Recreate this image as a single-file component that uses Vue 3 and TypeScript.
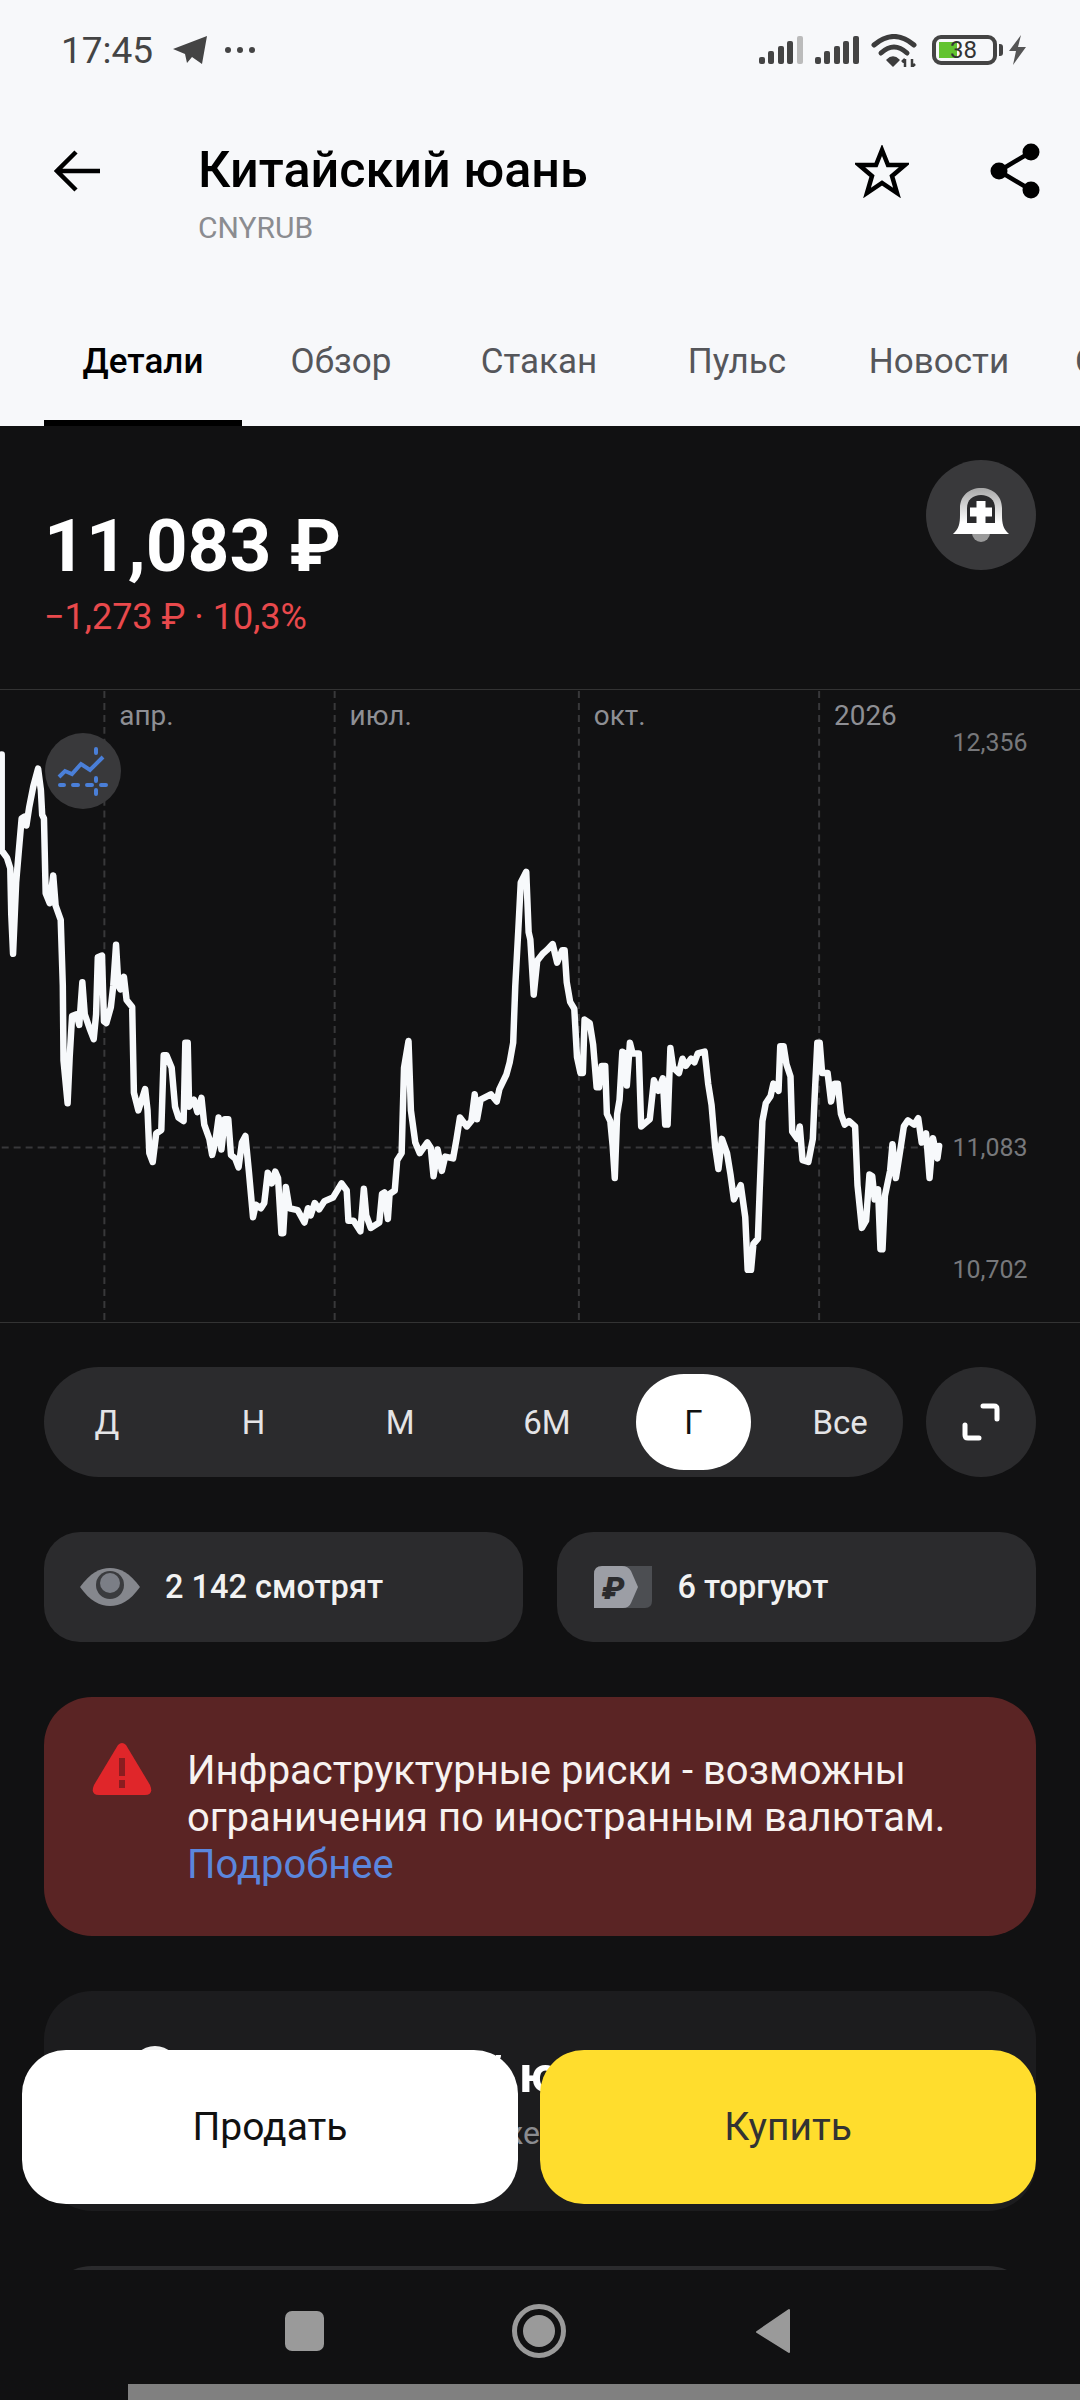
<script setup lang="ts">
import { computed } from 'vue'

const tabs = ['Детали', 'Обзор', 'Стакан', 'Пульс', 'Новости', 'Сделки']
const periods = ['Д', 'Н', 'М', '6М', 'Г', 'Все']
const months = [
  { x: 103, label: 'апр.' },
  { x: 334, label: 'июл.' },
  { x: 579, label: 'окт.' },
  { x: 820, label: '2026' },
]
const prices = [
  { y: 750, label: '12,356' },
  { y: 1156, label: '11,083' },
  { y: 1279, label: '10,702' },
]

// traced from the zoomed chart, x/2.904 and y/2.8 from the top of the crop
const partA = [0,150,0,420,15,440,25,470,28,600,33,710,38,600,42,510,50,420,58,330,66,325,72,350,80,300,92,240,106,190,114,250,118,320,123,330,128,540,140,568,150,490,157,575,172,615,178,800,180,1010,192,1130,198,1000,205,885,218,880,226,910,235,790,242,880,256,920,268,950,275,880,280,720,292,715,298,900,305,905,318,860,325,800,333,685,340,800,346,810,356,775,364,840,380,860,385,1100,398,1150,408,1120,418,1090,425,1150,430,1270,440,1295,450,1215,465,1205,472,995,480,995,495,1030,505,1140,515,1170,530,1180,535,960,542,960,546,1140,560,1120,570,1155,582,1115,590,1190,605,1230,613,1275,622,1240,632,1170,640,1260,650,1175,660,1175,668,1275,680,1285,690,1310,700,1240,710,1222,720,1320,732,1450,740,1415,755,1425,765,1410,775,1325,787,1355,797,1322,805,1340,815,1495,820,1495,828,1365,838,1425,862,1430,882,1465,892,1425,900,1445,912,1410,925,1428,940,1405,965,1395,990,1355,1005,1375,1010,1460,1025,1460,1045,1490,1055,1370,1062,1445,1075,1480,1100,1465,1108,1385,1115,1380,1125,1455,1130,1385,1145,1375,1152,1290,1165,1270,1172,1030,1185,955,1192,1150,1205,1240,1218,1270,1240,1240,1250,1255,1258,1335,1270,1260,1282,1320,1292,1280,1315,1285,1325,1230,1335,1170,1355,1195,1368,1180,1378,1105,1385,1175,1395,1120,1425,1105,1442,1125,1450,1090,1470,1050,1480,1015,1490,960,1496,800,1505,640,1512,510,1528,480,1535,650,1540,670,1550,825,1560,730]
const partB = [8,710,20,700,37,683,50,735,65,700,72,700,78,790,88,845,100,865,108,1000,118,1045,125,1045,130,895,145,905,155,965,165,1085,172,1085,180,1025,190,1025,195,1160,205,1180,212,1250,218,1340,225,1160,232,1120,240,985,248,990,253,1080,262,960,270,990,288,990,295,1195,320,1175,332,1065,345,1095,358,1060,365,1190,372,1190,380,975,388,1030,405,1045,415,1005,425,1025,440,1005,450,1015,460,990,480,985,490,1075,500,1135,510,1250,520,1315,530,1230,545,1270,555,1330,565,1400,585,1360,598,1450,605,1598,615,1598,622,1525,635,1510,640,1380,648,1180,658,1130,672,1110,680,1075,695,1095,700,970,710,970,718,1020,730,1055,735,1210,750,1230,757,1195,765,1290,782,1295,795,1230,800,1120,808,960,815,960,822,1045,838,1045,848,1125,858,1075,868,1075,877,1160,888,1190,900,1180,918,1195,925,1360,938,1480,950,1460,960,1330,968,1335,975,1400,985,1372,992,1540,998,1540,1005,1390,1020,1320,1027,1245,1037,1340,1050,1260,1060,1195,1072,1178,1090,1190,1102,1172,1112,1240,1125,1215,1135,1340,1145,1228,1158,1285,1163,1250]

function toPoints(raw: number[], dx: number) {
  const out: string[] = []
  for (let i = 0; i < raw.length; i += 2) {
    out.push(`${((raw[i] + dx) / 2.904).toFixed(1)},${(700 + raw[i + 1] / 2.8).toFixed(1)}`)
  }
  return out
}

const linePoints = computed(() => [...toPoints(partA, 0), ...toPoints(partB, 1568)].join(' '))
</script>

<template>
  <div class="screen">
    <header class="top">
      <div class="status">
        <span class="time">17:45</span>
        <svg class="plane" width="34" height="30" viewBox="0 0 34 30">
          <path d="M34 1 L29 29 L19 22 L14 28 L12 19 L0 14 Z" fill="#444" />
        </svg>
        <span class="dots"><i></i><i></i><i></i></span>
        <span class="status-gap"></span>
        <svg width="44" height="28" viewBox="0 0 44 28">
          <rect x="0" y="21" width="6" height="7" rx="2" fill="#444" />
          <rect x="9" y="15" width="6" height="13" rx="2" fill="#444" />
          <rect x="19" y="10" width="6" height="18" rx="2" fill="#444" />
          <rect x="28" y="5" width="6" height="23" rx="2" fill="#444" />
          <rect x="38" y="0" width="6" height="28" rx="2" fill="#bbb" />
        </svg>
        <svg width="44" height="28" viewBox="0 0 44 28">
          <rect x="0" y="21" width="6" height="7" rx="2" fill="#444" />
          <rect x="9" y="15" width="6" height="13" rx="2" fill="#444" />
          <rect x="19" y="10" width="6" height="18" rx="2" fill="#444" />
          <rect x="28" y="5" width="6" height="23" rx="2" fill="#444" />
          <rect x="38" y="0" width="6" height="28" rx="2" fill="#444" />
        </svg>
        <svg class="wifi" width="46" height="33" viewBox="0 0 46 33">
          <g fill="none" stroke="#3c3c3c" stroke-width="5" stroke-linecap="round">
            <path d="M3 11 Q23 -6 43 11" />
            <path d="M10 19 Q23 7 36 19" />
          </g>
          <path d="M16 26 Q22 20 28 26 L22 32 Z" fill="#3c3c3c" stroke="#3c3c3c" stroke-width="1.5" stroke-linejoin="round" />
          <path d="M34 33 V25 M31 28 L34 25 M41 25 V33 M41 33 L44 30" fill="none" stroke="#3c3c3c" stroke-width="2.5" />
        </svg>
        <div class="battery">
          <span class="battery-fill"></span>
          <span class="battery-num">38</span>
        </div>
        <span class="battery-nub"></span>
        <svg class="bolt" width="19" height="30" viewBox="0 0 19 30">
          <path d="M13 0 L1 16 H8 L5 30 L18 12 H10 Z" fill="#555" />
        </svg>
      </div>

      <div class="toolbar">
        <svg class="back" width="46" height="42" viewBox="0 0 46 42">
          <path d="M46 21 H4 M22 2 L3 21 L22 40" fill="none" stroke="#000" stroke-width="4.5" />
        </svg>
        <div class="titles">
          <div class="title">Китайский юань</div>
          <div class="ticker">CNYRUB</div>
        </div>
        <svg class="star" width="54" height="53" viewBox="0 0 54 53">
          <path d="M27 5 L33 20 L50 20 L37 31 L42 48 L27 38 L12 48 L17 31 L4 20 L21 20 Z" fill="none" stroke="#000" stroke-width="4.5" stroke-linejoin="miter" />
        </svg>
        <svg class="share" width="50" height="56" viewBox="0 0 50 56">
          <path d="M41 9 L9 28 L41 47" fill="none" stroke="#000" stroke-width="4.5" />
          <circle cx="41" cy="9" r="8.5" />
          <circle cx="9" cy="28" r="8.5" />
          <circle cx="41" cy="47" r="8.5" />
        </svg>
      </div>

      <nav class="tabs">
        <div v-for="(t, i) in tabs" :key="t" class="tab" :class="{ active: i === 0, wide: i === 4, last: i === 5 }">
          {{ t }}
        </div>
      </nav>
    </header>

    <main class="dark">
      <section class="quote">
        <div>
          <div class="price">11,083 ₽</div>
          <div class="change">−1,273 ₽ · 10,3%</div>
        </div>
        <button class="round">
          <svg width="60" height="60" viewBox="0 0 60 60">
            <defs>
              <linearGradient id="bellShade" x1="0" y1="0" x2="0" y2="1">
                <stop offset="0" stop-color="#a8a8a8" />
                <stop offset="0.75" stop-color="#fff" />
              </linearGradient>
            </defs>
            <circle cx="30" cy="48" r="9" fill="#9a9a9a" />
            <path d="M2 49 C8 44 9 38 9 30 V23 C9 11 18 3 30 3 C42 3 51 11 51 23 V30 C51 38 52 44 58 49 Z" fill="url(#bellShade)" />
            <path d="M16 38 V23 C16 15 22 10 30 10 C38 10 44 15 44 23 V38 Z" fill="#2a2a2c" />
            <path d="M30 16 V38 M19 27 H41" stroke="#fff" stroke-width="9" />
          </svg>
        </button>
      </section>

      <section class="chart">
        <svg width="1080" height="634" viewBox="0 689 1080 634">
          <g stroke="#38383a" stroke-width="2" stroke-dasharray="7 5">
            <line v-for="m in months" :key="m.x" :x1="m.x" :x2="m.x" y1="690" y2="1322" />
            <line x1="0" x2="940" y1="1148" y2="1148" />
          </g>
          <text v-for="m in months" :key="m.label" class="month" :x="m.x + 15" y="724">{{ m.label }}</text>
          <text v-for="p in prices" :key="p.label" class="axis" x="1029" :y="p.y" text-anchor="end">{{ p.label }}</text>
          <polyline :points="linePoints" fill="none" stroke="#f7f9fb" stroke-width="6.5" stroke-linejoin="round" stroke-linecap="round" />
        </svg>
        <div class="indicator">
          <svg width="76" height="76" viewBox="0 0 76 76">
            <polyline points="14,44 20,38 27,41 36,31 45,37 58,24" fill="none" stroke="#4a7fd8" stroke-width="4" />
            <g stroke="#4a7fd8" stroke-width="4" stroke-linecap="round">
              <path d="M15 52 H19 M28 52 H33 M42 52 H47 M56 52 H61 M51 16 V20 M51 45 V48 M51 57 V61" />
            </g>
          </svg>
        </div>
      </section>

      <section class="ranges">
        <div class="pill">
          <span v-for="p in periods" :key="p" class="period" :class="{ on: p === 'Г' }">{{ p }}</span>
        </div>
        <button class="round">
          <svg width="38" height="38" viewBox="0 0 38 38">
            <path d="M21 3 H32 Q35 3 35 6 V16 M3 22 V32 Q3 35 6 35 H17" fill="none" stroke="#fff" stroke-width="5" stroke-linecap="round" />
          </svg>
        </button>
      </section>

      <section class="stats">
        <div class="stat">
          <svg width="60" height="38" viewBox="0 0 60 38">
            <path d="M0 19 C10 5 20 0 30 0 C40 0 50 5 60 19 C50 33 40 38 30 38 C20 38 10 33 0 19 Z" fill="#85878d" />
            <circle cx="30" cy="17" r="14" fill="#3a3b3e" />
            <circle cx="30" cy="15" r="10" fill="#7b7e86" />
          </svg>
          <span class="stat-text">2 142 смотрят</span>
        </div>
        <div class="stat ruble">
          <svg width="58" height="42" viewBox="0 0 58 42">
            <path d="M22 0 H58 V35 Q58 42 51 42 H22 Z" fill="#4c4e52" />
            <path d="M8 0 H28 Q34 0 37 5 L44 21 L37 37 Q35 42 29 42 H0 V8 Q0 0 8 0 Z" fill="#9c9ea5" />
            <text x="8" y="33" class="tile-sign">₽</text>
          </svg>
          <span class="stat-text">6 торгуют</span>
        </div>
      </section>

      <section class="warning">
        <svg class="warn-icon" width="60" height="54" viewBox="0 0 60 54">
          <path d="M26 3 Q30 -1 34 3 L58 43 Q62 53 53 53 H7 Q-2 53 2 43 Z" fill="#e0262a" />
          <rect x="27" y="16" width="6" height="18" fill="#8a1d20" />
          <rect x="27" y="38" width="6" height="8" fill="#8a1d20" />
        </svg>
        <p class="warn-text">
          Инфраструктурные риски - возможны<br />
          ограничения по иностранным валютам.<br />
          <a class="more">Подробнее</a>
        </p>
      </section>

      <section class="promo">
        <span class="promo-dot"></span>
        <div>
          <div class="promo-title">Китайский юань</div>
          <div class="promo-sub">Торгуется на бирже</div>
        </div>
      </section>

      <section class="next-card"></section>
    </main>

    <div class="actions">
      <button class="action sell">Продать</button>
      <button class="action buy">Купить</button>
    </div>

    <footer class="navbar">
      <span class="nav-square"></span>
      <span class="nav-circle"></span>
      <svg width="36" height="46" viewBox="0 0 36 46">
        <path d="M34 2 V44 L2 24 Z" fill="#9a9a9a" stroke="#9a9a9a" stroke-width="2" stroke-linejoin="round" />
      </svg>
      <span class="gesture"></span>
    </footer>
  </div>
</template>

<style>
body {
  background: #111112;
}
</style>

<style scoped>
.screen {
  position: relative;
  width: 1080px;
  height: 2400px;
  overflow: hidden;
  background: #111112;
  font-family: Roboto, 'Noto Sans', sans-serif;
}

.top {
  height: 426px;
  background: #f7f8fa;
  display: flex;
  flex-direction: column;
}

.status {
  height: 100px;
  display: flex;
  align-items: center;
  padding: 0 53px 0 61px;
  color: #444;
}

.time {
  font-size: 37px;
  width: 112px;
}

.dots {
  display: flex;
  gap: 6px;
  margin-left: 18px;
}

.dots i {
  width: 6px;
  height: 6px;
  border-radius: 50%;
  background: #444;
}

.status-gap {
  flex: 1;
}

.status svg + svg {
  margin-left: 12px;
}

.battery {
  position: relative;
  width: 65px;
  height: 30px;
  margin-left: 15px;
  border: 4px solid #444;
  border-radius: 9px;
  box-sizing: border-box;
  overflow: hidden;
}

.battery-fill {
  position: absolute;
  left: 3px;
  top: 3px;
  bottom: 3px;
  width: 18px;
  background: #62c32f;
}

.battery-num {
  position: absolute;
  left: 14px;
  top: -3px;
  font-size: 24px;
  line-height: 28px;
  color: #333;
}

.battery-nub {
  width: 4px;
  height: 12px;
  margin-left: 2px;
  border-radius: 0 3px 3px 0;
  background: #444;
}

.status .bolt {
  margin-left: 5px;
}

.toolbar {
  height: 146px;
  display: flex;
  align-items: flex-start;
  padding-left: 54px;
}

.back {
  margin-top: 50px;
}

.titles {
  margin-left: 98px;
  flex: 1;
}

.title {
  margin-top: 40px;
  font-size: 50.3px;
  line-height: 60px;
  font-weight: 500;
  color: #000;
}

.ticker {
  margin-top: 13px;
  font-size: 30px;
  line-height: 30px;
  color: #8b8c90;
}

.star {
  margin-top: 45px;
}

.share {
  margin: 43px 40px 0 81px;
}

.tabs {
  flex: 1;
  display: flex;
  padding-left: 44px;
  overflow: hidden;
}

.tab {
  flex: none;
  width: 198px;
  box-sizing: border-box;
  padding-top: 94px;
  text-align: center;
  font-size: 35px;
  line-height: 44px;
  color: #55565a;
  border-bottom: 6px solid transparent;
}

.tab.active {
  color: #000;
  font-weight: 500;
  border-bottom-color: #000;
}

.tab.wide {
  width: 206px;
}

.tab.last {
  text-align: left;
  padding-left: 33px;
}

.dark {
  display: flex;
  flex-direction: column;
  gap: 55px;
}

.quote {
  height: 263px;
  box-sizing: border-box;
  padding: 34px 44px 0 44px;
  margin-bottom: -55px;
  display: flex;
  justify-content: space-between;
  align-items: flex-start;
}

.price {
  margin-top: 41px;
  font-size: 73px;
  line-height: 90px;
  font-weight: 700;
  color: #fff;
}

.change {
  margin-top: 4px;
  font-size: 36px;
  line-height: 44px;
  color: #e9494c;
}

.round {
  width: 110px;
  height: 110px;
  flex: none;
  padding: 0;
  border: 0;
  border-radius: 50%;
  background: #39393b;
  display: flex;
  align-items: center;
  justify-content: center;
}

.chart {
  position: relative;
  height: 633px;
  margin-bottom: -10px;
}

.chart > svg {
  display: block;
  box-sizing: border-box;
  border-top: 1px solid #333;
  border-bottom: 1px solid #333;
}

.month {
  font-size: 28px;
  fill: #8e8f94;
}

.axis {
  font-size: 25px;
  fill: #77787b;
}

.indicator {
  position: absolute;
  left: 45px;
  top: 44px;
  width: 76px;
  height: 76px;
  border-radius: 50%;
  background: #39393b;
}

.ranges {
  display: flex;
  justify-content: space-between;
  padding: 0 44px;
}

.ranges .round {
  background: #2b2b2d;
}

.pill {
  width: 859px;
  height: 110px;
  box-sizing: border-box;
  padding: 7px 5px;
  border-radius: 55px;
  background: #2b2b2d;
  display: flex;
  gap: 31px;
}

.period {
  width: 116px;
  height: 96px;
  border-radius: 48px;
  display: flex;
  align-items: center;
  justify-content: center;
  font-size: 33px;
  color: #e4e4e6;
}

.period.on {
  background: #fff;
  color: #111;
}

.stats {
  display: flex;
  gap: 34px;
  padding: 0 44px;
}

.stat {
  flex: 1;
  height: 110px;
  border-radius: 36px;
  background: #2b2b2d;
  display: flex;
  align-items: center;
  padding-left: 36px;
}

.stat.ruble {
  padding-left: 37px;
}

.stat-text {
  margin-left: 25px;
  font-size: 32.5px;
  font-weight: 500;
  color: #f2f2f2;
}

.stat.ruble .stat-text {
  margin-left: 26px;
}

.tile-sign {
  font-size: 32px;
  font-weight: 900;
  font-style: italic;
  fill: #2b2b2d;
}

.warning {
  margin: 0 44px;
  height: 239px;
  box-sizing: border-box;
  padding: 45px 0 0 48px;
  border-radius: 48px;
  background: #5a2424;
  display: flex;
  align-items: flex-start;
}

.warn-text {
  margin: 5px 0 0 35px;
  font-size: 40px;
  line-height: 47px;
  color: #f7f2f0;
}

.more {
  color: #5b86dd;
}

.promo {
  margin: 0 44px;
  height: 220px;
  box-sizing: border-box;
  padding: 55px 0 0 87px;
  border-radius: 48px;
  background: #1c1c1e;
  display: flex;
  align-items: flex-start;
}

.promo-dot {
  flex: none;
  width: 48px;
  height: 48px;
  border-radius: 50%;
  background: #f2f2f2;
}

.promo-title {
  margin: -1px 0 0 76px;
  font-size: 50px;
  line-height: 60px;
  font-weight: 700;
  color: #fff;
  white-space: nowrap;
}

.promo-sub {
  margin: 10px 0 0 67px;
  font-size: 32px;
  line-height: 36px;
  color: #8b8c90;
  white-space: nowrap;
}

.next-card {
  margin: 0 44px;
  height: 100px;
  border-radius: 48px;
  background: #2b2b2d;
}

.actions {
  position: absolute;
  left: 22px;
  right: 44px;
  top: 2050px;
  display: flex;
  gap: 22px;
}

.action {
  flex: 1;
  height: 154px;
  border: 0;
  border-radius: 44px;
  font-family: inherit;
  font-size: 39px;
  padding: 0;
}

.sell {
  background: #fff;
  color: #111;
}

.buy {
  background: #ffdd2d;
  color: #333;
}

.navbar {
  position: absolute;
  left: 0;
  right: 0;
  top: 2270px;
  height: 130px;
  background: #111112;
}

.nav-square {
  position: absolute;
  left: 285px;
  top: 41px;
  width: 39px;
  height: 40px;
  border-radius: 7px;
  background: #9a9a9a;
}

.nav-circle {
  position: absolute;
  left: 512px;
  top: 34px;
  width: 54px;
  height: 54px;
  box-sizing: border-box;
  border-radius: 50%;
  border: 5px solid #9a9a9a;
}

.nav-circle::after {
  content: '';
  position: absolute;
  left: 6px;
  top: 6px;
  width: 32px;
  height: 32px;
  border-radius: 50%;
  background: #9a9a9a;
}

.navbar svg {
  position: absolute;
  left: 755px;
  top: 38px;
}

.gesture {
  position: absolute;
  left: 128px;
  right: 0;
  bottom: 0;
  height: 16px;
  background: #808080;
}
</style>
